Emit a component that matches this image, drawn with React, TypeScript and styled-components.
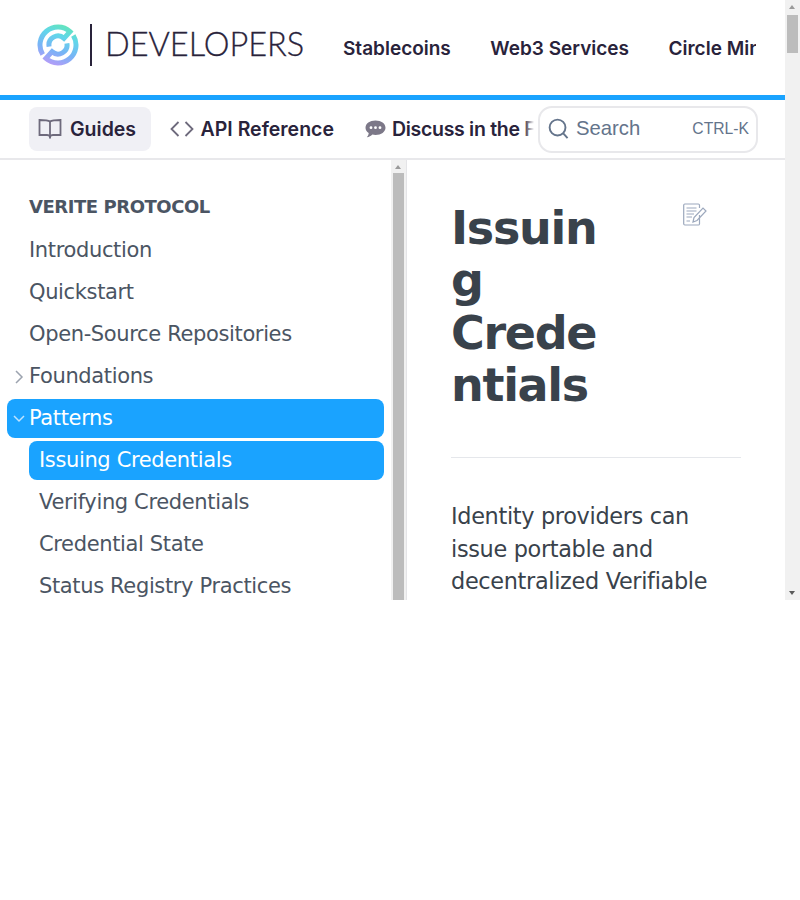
import React from "react";
import styled, { createGlobalStyle } from "styled-components";

const Global = createGlobalStyle`
  html, body { margin: 0; padding: 0; background: #fff; }
  * { box-sizing: border-box; }
`;

const Viewport = styled.div`
  position: relative;
  width: 800px;
  height: 600px;
  overflow: hidden;
  background: #fff;
  font-family: "DejaVu Sans", sans-serif;
`;
const Page = styled.div`
  width: 785px;
`;
const ScrollTrack = styled.div<{ $right: number }>`
  position: absolute;
  top: 0;
  bottom: 0;
  right: ${(p) => p.$right}px;
  width: 15px;
  background: #f1f1f1;
`;
const ScrollThumb = styled.div<{ $top: number; $height: number }>`
  position: absolute;
  left: 2px;
  width: 11px;
  top: ${(p) => p.$top}px;
  height: ${(p) => p.$height}px;
  background: #bcbcbc;
`;
const ArrowUp = styled.span`
  position: absolute;
  top: 5px;
  left: 4px;
  width: 0;
  height: 0;
  border-left: 3.5px solid transparent;
  border-right: 3.5px solid transparent;
  border-bottom: 4px solid #9a9a9a;
`;
const ArrowDown = styled.span`
  position: absolute;
  bottom: 5px;
  left: 4px;
  width: 0;
  height: 0;
  border-left: 3.5px solid transparent;
  border-right: 3.5px solid transparent;
  border-top: 4px solid #5a5a5a;
`;
const TopBar = styled.header`
  height: 100px;
  border-bottom: 5px solid #1aa3ff;
  display: flex;
  align-items: center;
  padding: 0 29px 6px 37px;
`;
const LogoLink = styled.a`
  display: flex;
  align-items: center;
  flex: none;
  width: 266px;
`;
const LogoMark = styled.svg`
  flex: none;
`;
const LogoDivider = styled.span`
  width: 2px;
  height: 42px;
  background: #29233b;
  margin: 0 13px 0 11px;
  flex: none;
`;
const LogoWord = styled.span`
  font-family: Lato, sans-serif;
  font-weight: 300;
  font-size: 32.5px;
  color: #29233b;
  -webkit-text-stroke: 0.3px #29233b;
  line-height: 1;
  flex: none;
`;
const TopNav = styled.nav`
  display: flex;
  gap: 39.5px;
  margin-left: 40px;
  flex: 1;
  min-width: 0;
  overflow: hidden;
  white-space: nowrap;
  padding-top: 7px;
`;
const TopNavItem = styled.a`
  font-family: Inter, sans-serif;
  font-weight: 600;
  font-size: 19px;
  color: #29233b;
  flex: none;
`;
const TabBar = styled.div`
  height: 60px;
  border-bottom: 2px solid #e8e8eb;
  display: flex;
  align-items: center;
  padding: 0 28px 0 29px;
`;
const Tabs = styled.div`
  display: flex;
  align-items: center;
  width: 505px;
  flex: none;
  overflow: hidden;
  white-space: nowrap;
  position: relative;
`;
const Tab = styled.a<{ $active?: boolean }>`
  display: flex;
  align-items: center;
  flex: none;
  gap: ${(p) => (p.$active ? "8px" : "7px")};
  height: 44px;
  padding: 0 15px 0 ${(p) => (p.$active ? "9px" : "10px")};
  margin-right: ${(p) => (p.$active ? "8.5px" : "6px")};
  border-radius: 8px;
  background: ${(p) => (p.$active ? "#f0f0f5" : "transparent")};
  font-family: Inter, sans-serif;
  font-weight: 600;
  font-size: 19.5px;
  color: #29233b;
`;
const TightLabel = styled.span`
  letter-spacing: -0.3px;
`;
const Fade = styled.span`
  position: absolute;
  right: 0;
  top: 0;
  bottom: 0;
  width: 10px;
  background: linear-gradient(to right, rgba(255, 255, 255, 0), #fff);
`;
const SearchBox = styled.div`
  width: 220px;
  height: 47px;
  flex: none;
  margin-left: 4px;
  border: 2px solid #e8e8eb;
  border-radius: 14px;
  display: flex;
  align-items: center;
  padding: 0 7px 1px 8px;
  font-family: "Liberation Sans", Arial, sans-serif;
  color: #64748b;
  background: #fff;
`;
const SearchLabel = styled.span`
  font-size: 20.3px;
  margin-left: 7px;
  flex: 1;
`;
const SearchHint = styled.span`
  font-size: 15.7px;
`;
const Main = styled.div`
  display: flex;
  align-items: flex-start;
`;
const Sidebar = styled.aside`
  position: relative;
  width: 407px;
  height: 740px;
  flex: none;
  overflow: hidden;
  border-right: 1px solid #e4e4e7;
  padding: 27px 22px 0 7px;
`;
const SideTitle = styled.div`
  font-size: 18px;
  letter-spacing: -0.45px;
  font-weight: 700;
  color: #4b5563;
  line-height: 40px;
  padding-left: 22px;
  margin-bottom: 4px;
`;
const SideRow = styled.a<{ $active?: boolean; $child?: boolean }>`
  display: flex;
  align-items: center;
  position: relative;
  height: 39px;
  margin-bottom: 3px;
  margin-left: ${(p) => (p.$child ? "22px" : "0")};
  padding: 0 0 2px ${(p) => (p.$child ? "10px" : "22px")};
  border-radius: 8px;
  font-size: 21px;
  letter-spacing: -0.36px;
  color: ${(p) => (p.$active ? "#fff" : "#4b5563")};
  background: ${(p) => (p.$active ? "#1aa3ff" : "transparent")};
`;
const Caret = styled.svg`
  position: absolute;
  left: 6px;
  top: 12px;
`;
const Article = styled.main`
  flex: 1;
  min-width: 0;
  padding: 42px 44px 0 44px;
  position: relative;
`;
const Title = styled.h1`
  margin: 0;
  width: 150px;
  font-size: 46px;
  letter-spacing: -1.3px;
  line-height: 52.4px;
  font-weight: 700;
  color: #39424b;
  overflow-wrap: anywhere;
`;
const EditLink = styled.a`
  position: absolute;
  left: 276px;
  top: 43px;
  display: block;
  line-height: 0;
`;
const Rule = styled.hr`
  border: none;
  border-top: 1px solid #e5e7eb;
  margin: 45.4px 0 42px;
`;
const Lead = styled.p`
  margin: 2px 0 0;
  font-size: 22.4px;
  letter-spacing: -0.33px;
  line-height: 32.5px;
  color: #39424b;
`;
const ChatSvg = styled.svg`
  margin-right: -1px;
`;

const Logo = () => (
  <LogoMark width="42" height="42" viewBox="0 0 42 42" fill="none">
    <defs>
      <linearGradient id="lg" gradientUnits="userSpaceOnUse" x1="30" y1="1" x2="15" y2="41">
        <stop offset="0" stopColor="#62e6b8" />
        <stop offset="0.3" stopColor="#62d6ea" />
        <stop offset="0.65" stopColor="#78b4f6" />
        <stop offset="1" stopColor="#b49cf8" />
      </linearGradient>
    </defs>
    <g stroke="url(#lg)" strokeWidth="5">
      <path d="M5.7 30.5 A18 18 0 0 1 33 7.6 L27 14.3 A9 9 0 0 0 12.1 22.6" />
      <path d="M36.3 11.5 A18 18 0 0 1 9 34.4 L15 27.7 A9 9 0 0 0 29.9 19.4" />
    </g>
  </LogoMark>
);

const BookIcon = () => (
  <svg width="24" height="20" viewBox="0 0 24 20" fill="none" stroke="#6e6a7c" strokeWidth="1.8">
    <path d="M12 2.5 C10 1.2 5 1 1.5 1 V16 H9 C10.5 16 11.5 16.5 12 17.5 C12.5 16.5 13.5 16 15 16 H22.5 V1 C19 1 14 1.2 12 2.5 Z" />
    <path d="M12 2.5 V19.5" />
  </svg>
);
const CodeIcon = () => (
  <svg width="24" height="18" viewBox="0 0 24 18" fill="none" stroke="#6e6a7c" strokeWidth="1.8">
    <path d="M8.5 2 L1.5 9 L8.5 16" />
    <path d="M15.5 2 L22.5 9 L15.5 16" />
  </svg>
);
const ChatIcon = () => (
  <ChatSvg width="21" height="18" viewBox="0 0 21 18">
    <path
      d="M10.5 0.5 C16.2 0.5 20.5 3.6 20.5 7.7 C20.5 11.8 16.2 14.9 10.5 14.9 C9.4 14.9 8.4 14.8 7.4 14.5 C6 15.9 4 17 1.8 17.3 C3 16 3.7 14.4 3.7 13 C1.7 11.6 0.5 9.8 0.5 7.7 C0.5 3.6 4.8 0.5 10.5 0.5 Z"
      fill="#7c7888"
    />
    <circle cx="6" cy="7.7" r="1.4" fill="#fff" />
    <circle cx="10.5" cy="7.7" r="1.4" fill="#fff" />
    <circle cx="15" cy="7.7" r="1.4" fill="#fff" />
  </ChatSvg>
);
const SearchIcon = () => (
  <svg width="21" height="21" viewBox="0 0 22 22" fill="none" stroke="#64748b" strokeWidth="2">
    <circle cx="10" cy="10" r="8.3" />
    <path d="M16 16 L20.5 21" />
  </svg>
);
const EditIcon = () => (
  <svg width="24" height="23" viewBox="0 0 24 23" fill="none" stroke="#9ca8bd" strokeWidth="1.2">
    <path d="M16.5 12 V21 A1.2 1.2 0 0 1 15.3 22 H1.8 A1.2 1.2 0 0 1 .7 21 V2 A1.2 1.2 0 0 1 1.8 1 H15.3 A1.2 1.2 0 0 1 16.5 2 V5" />
    <path d="M3.5 5 H13.5 M3.5 8 H13.5 M3.5 11 H11 M3.5 14 H9 M3.5 18 H7" />
    <path d="M10 19 L11 14.5 L20 5 L23 8 L14 17.5 Z" />
  </svg>
);

const sideItems = ["Introduction", "Quickstart", "Open-Source Repositories"];
const childItems = ["Verifying Credentials", "Credential State", "Status Registry Practices"];

export default function App() {
  return (
    <>
      <Global />
      <Viewport>
        <Page>
          <TopBar>
            <LogoLink>
              <Logo />
              <LogoDivider />
              <LogoWord>DEVELOPERS</LogoWord>
            </LogoLink>
            <TopNav>
              <TopNavItem>Stablecoins</TopNavItem>
              <TopNavItem>Web3 Services</TopNavItem>
              <TopNavItem>Circle Mint</TopNavItem>
            </TopNav>
          </TopBar>
          <TabBar>
            <Tabs>
              <Tab $active>
                <BookIcon />
                Guides
              </Tab>
              <Tab>
                <CodeIcon />
                API Reference
              </Tab>
              <Tab>
                <ChatIcon />
                <TightLabel>Discuss in the Forum</TightLabel>
              </Tab>
              <Fade />
            </Tabs>
            <SearchBox>
              <SearchIcon />
              <SearchLabel>Search</SearchLabel>
              <SearchHint>CTRL-K</SearchHint>
            </SearchBox>
          </TabBar>
          <Main>
            <Sidebar>
              <SideTitle>VERITE PROTOCOL</SideTitle>
              {sideItems.map((s) => (
                <SideRow key={s}>{s}</SideRow>
              ))}
              <SideRow>
                <Caret width="12" height="16" viewBox="0 0 12 16" fill="none" stroke="#9ca3af" strokeWidth="1.5">
                  <path d="M3 2 L9 8 L3 14" />
                </Caret>
                Foundations
              </SideRow>
              <SideRow $active>
                <Caret width="12" height="16" viewBox="0 0 12 16" fill="none" stroke="#bfe3ff" strokeWidth="1.5">
                  <path d="M1 5 L6 10 L11 5" />
                </Caret>
                Patterns
              </SideRow>
              <SideRow $active $child>
                Issuing Credentials
              </SideRow>
              {childItems.map((s) => (
                <SideRow key={s} $child>
                  {s}
                </SideRow>
              ))}
              <ScrollTrack $right={0}>
                <ArrowUp />
                <ScrollThumb $top={13} $height={700} />
              </ScrollTrack>
            </Sidebar>
            <Article>
              <EditLink>
                <EditIcon />
              </EditLink>
              <Title>Issuing Credentials</Title>
              <Rule />
              <Lead>Identity providers can issue portable and decentralized Verifiable Credentials</Lead>
            </Article>
          </Main>
        </Page>
        <ScrollTrack $right={0}>
          <ArrowUp />
          <ScrollThumb $top={15} $height={38} />
          <ArrowDown />
        </ScrollTrack>
      </Viewport>
    </>
  );
}
